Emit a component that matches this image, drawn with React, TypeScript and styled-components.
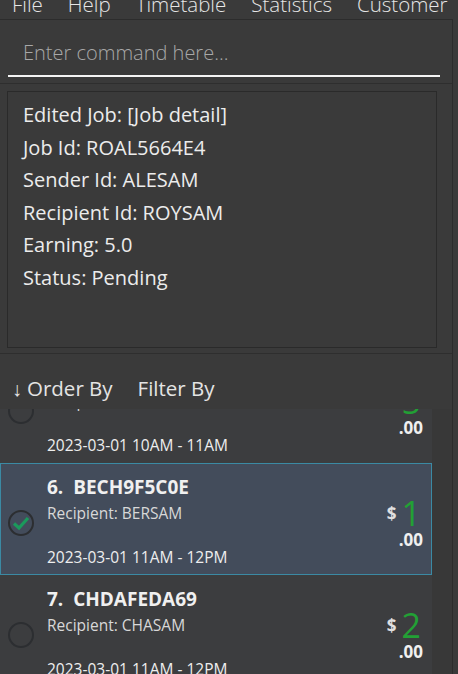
import React from "react";
import styled, { createGlobalStyle } from "styled-components";

const Global = createGlobalStyle`
  html, body { margin: 0; padding: 0; background: #3a3a3a; overflow: hidden; }
  body { width: 458px; height: 674px; font-family: "Open Sans", "Noto Sans", sans-serif; }
  * { box-sizing: border-box; }
`;

const Page = styled.div`
  width: 458px;
  height: 674px;
  display: flex;
  flex-direction: column;
  overflow: hidden;
  background: #3a3a3a;
`;

const MenuBar = styled.div`
  height: 19px;
  display: flex;
  align-items: flex-end;
  gap: 25px;
  overflow: hidden;
  padding-left: 12px;
`;

const MenuItem = styled.span`
  font-size: 20.5px;
  font-weight: 300;
  line-height: 21px;
  color: #e6e6e6;
  padding-bottom: 4px;
  white-space: nowrap;
`;

const Body = styled.div`
  flex: 1;
  display: flex;
  min-height: 0;
`;

const MainCol = styled.div`
  width: 453px;
  border-right: 1px solid #2c2c2c;
  display: flex;
  flex-direction: column;
  min-height: 0;
`;

const CommandPanel = styled.div`
  height: 64px;
  border-top: 1px solid #2c2c2c;
  padding: 14px 12px 0 8px;
`;

const CommandInput = styled.div`
  height: 43px;
  border-bottom: 2px solid #f4f4f4;
  padding: 5px 0 0 15px;
  font-size: 20px;
  font-weight: 300;
  color: #a8a8a8;
  white-space: nowrap;
`;

const ResultPanel = styled.div`
  height: 271px;
  border-top: 1px solid #2e2e2e;
  border-bottom: 1px solid #2e2e2e;
  padding: 7px 15px 5px 7px;
`;

const ResultBox = styled.div`
  height: 257px;
  border: 1px solid #2a2a2a;
  padding: 7px 0 0 15px;
  display: flex;
  flex-direction: column;
`;

const ResultLine = styled.div`
  font-size: 20px;
  line-height: 32.6px;
  color: #ececec;
  white-space: nowrap;
`;

const Toolbar = styled.div`
  height: 55px;
  display: flex;
  align-items: center;
  gap: 25px;
  padding: 13px 0 0 12px;
`;

const ToolButton = styled.span`
  font-size: 20.5px;
  color: #e4e4e4;
  white-space: nowrap;
  display: flex;
  align-items: center;
`;

const Arrow = styled.span`
  font-size: 20px;
  margin-right: 5px;
`;

const ListArea = styled.div`
  flex: 1;
  min-height: 0;
  display: flex;
  overflow: hidden;
`;

const ListScroll = styled.div`
  width: 432px;
  overflow: hidden;
  background: #3c3d3f;
`;

const ListInner = styled.div`
  margin-top: -58px;
  display: flex;
  flex-direction: column;
`;

const Card = styled.div<{ $selected?: boolean }>`
  height: 112px;
  display: grid;
  grid-template-columns: 46px 1fr 54px;
  background: ${(p) => (p.$selected ? "#434c5b" : "#3c3d3f")};
  border: 1px solid ${(p) => (p.$selected ? "#3b8aa4" : "transparent")};
`;

const CheckCol = styled.div`
  display: flex;
  align-items: flex-start;
  justify-content: flex-start;
  padding: 46px 0 0 7px;
`;

const Circle = styled.div`
  width: 26px;
  height: 26px;
  border-radius: 50%;
  border: 2px solid #2c2e31;
  display: flex;
  align-items: center;
  justify-content: center;
`;

const Info = styled.div`
  display: flex;
  flex-direction: column;
  padding-top: 10px;
`;

const Title = styled.div`
  font-size: 19px;
  font-weight: 700;
  color: #f0f0f0;
  line-height: 26px;
  white-space: pre;
`;

const Recipient = styled.div`
  font-size: 15.5px;
  color: #d8d8d8;
  line-height: 26px;
`;

const DateText = styled.div`
  margin-top: auto;
  margin-bottom: 6px;
  font-size: 15.5px;
  color: #eeeeee;
  line-height: 22px;
`;

const Price = styled.div`
  display: flex;
  flex-direction: column;
  align-items: flex-end;
  padding: 32px 8px 0 0;
`;

const PriceTop = styled.div`
  display: flex;
  align-items: center;
  gap: 5px;
  height: 34px;
  margin-right: 2px;
`;

const Dollar = styled.span`
  font-size: 17px;
  font-weight: 700;
  color: #e0e0e0;
`;

const Amount = styled.span`
  font-size: 34px;
  color: #22a035;
  line-height: 34px;
`;

const Cents = styled.span`
  font-size: 17px;
  font-weight: 700;
  color: #f0f0f0;
  line-height: 20px;
`;

const SideStrip = styled.div`
  flex: 1;
  background: #383838;
`;

const Check = () => (
  <svg width="20" height="20" viewBox="0 0 20 20">
    <path d="M3 10.5 L8 15 L17 5" fill="none" stroke="#1b9a5c" strokeWidth="3.2" />
  </svg>
);

type Job = { idx: number; id: string; recipient: string; date: string; amount: string; selected?: boolean };

const jobs: Job[] = [
  { idx: 5, id: "ALBE1234AB", recipient: "ALESAM", date: "2023-03-01 10AM - 11AM", amount: "5" },
  { idx: 6, id: "BECH9F5C0E", recipient: "BERSAM", date: "2023-03-01 11AM - 12PM", amount: "1", selected: true },
  { idx: 7, id: "CHDAFEDA69", recipient: "CHASAM", date: "2023-03-01 11AM - 12PM", amount: "2" },
];

export default function App() {
  return (
    <Page>
      <Global />
      <MenuBar>
        <MenuItem>File</MenuItem>
        <MenuItem>Help</MenuItem>
        <MenuItem>Timetable</MenuItem>
        <MenuItem>Statistics</MenuItem>
        <MenuItem>Customer</MenuItem>
      </MenuBar>
      <Body>
        <MainCol>
          <CommandPanel>
            <CommandInput>Enter command here...</CommandInput>
          </CommandPanel>
          <ResultPanel>
            <ResultBox>
              <ResultLine>Edited Job: [Job detail]</ResultLine>
              <ResultLine>Job Id: ROAL5664E4</ResultLine>
              <ResultLine>Sender Id: ALESAM</ResultLine>
              <ResultLine>Recipient Id: ROYSAM</ResultLine>
              <ResultLine>Earning: 5.0</ResultLine>
              <ResultLine>Status: Pending</ResultLine>
            </ResultBox>
          </ResultPanel>
          <Toolbar>
            <ToolButton>
              <Arrow>↓</Arrow>Order By
            </ToolButton>
            <ToolButton>Filter By</ToolButton>
          </Toolbar>
          <ListArea>
            <ListScroll>
              <ListInner>
                {jobs.map((j) => (
                  <Card key={j.idx} $selected={j.selected}>
                    <CheckCol>
                      <Circle>{j.selected && <Check />}</Circle>
                    </CheckCol>
                    <Info>
                      <Title>{`${j.idx}.  ${j.id}`}</Title>
                      <Recipient>Recipient: {j.recipient}</Recipient>
                      <DateText>{j.date}</DateText>
                    </Info>
                    <Price>
                      <PriceTop>
                        <Dollar>$</Dollar>
                        <Amount>{j.amount}</Amount>
                      </PriceTop>
                      <Cents>.00</Cents>
                    </Price>
                  </Card>
                ))}
              </ListInner>
            </ListScroll>
            <SideStrip />
          </ListArea>
        </MainCol>
      </Body>
    </Page>
  );
}
